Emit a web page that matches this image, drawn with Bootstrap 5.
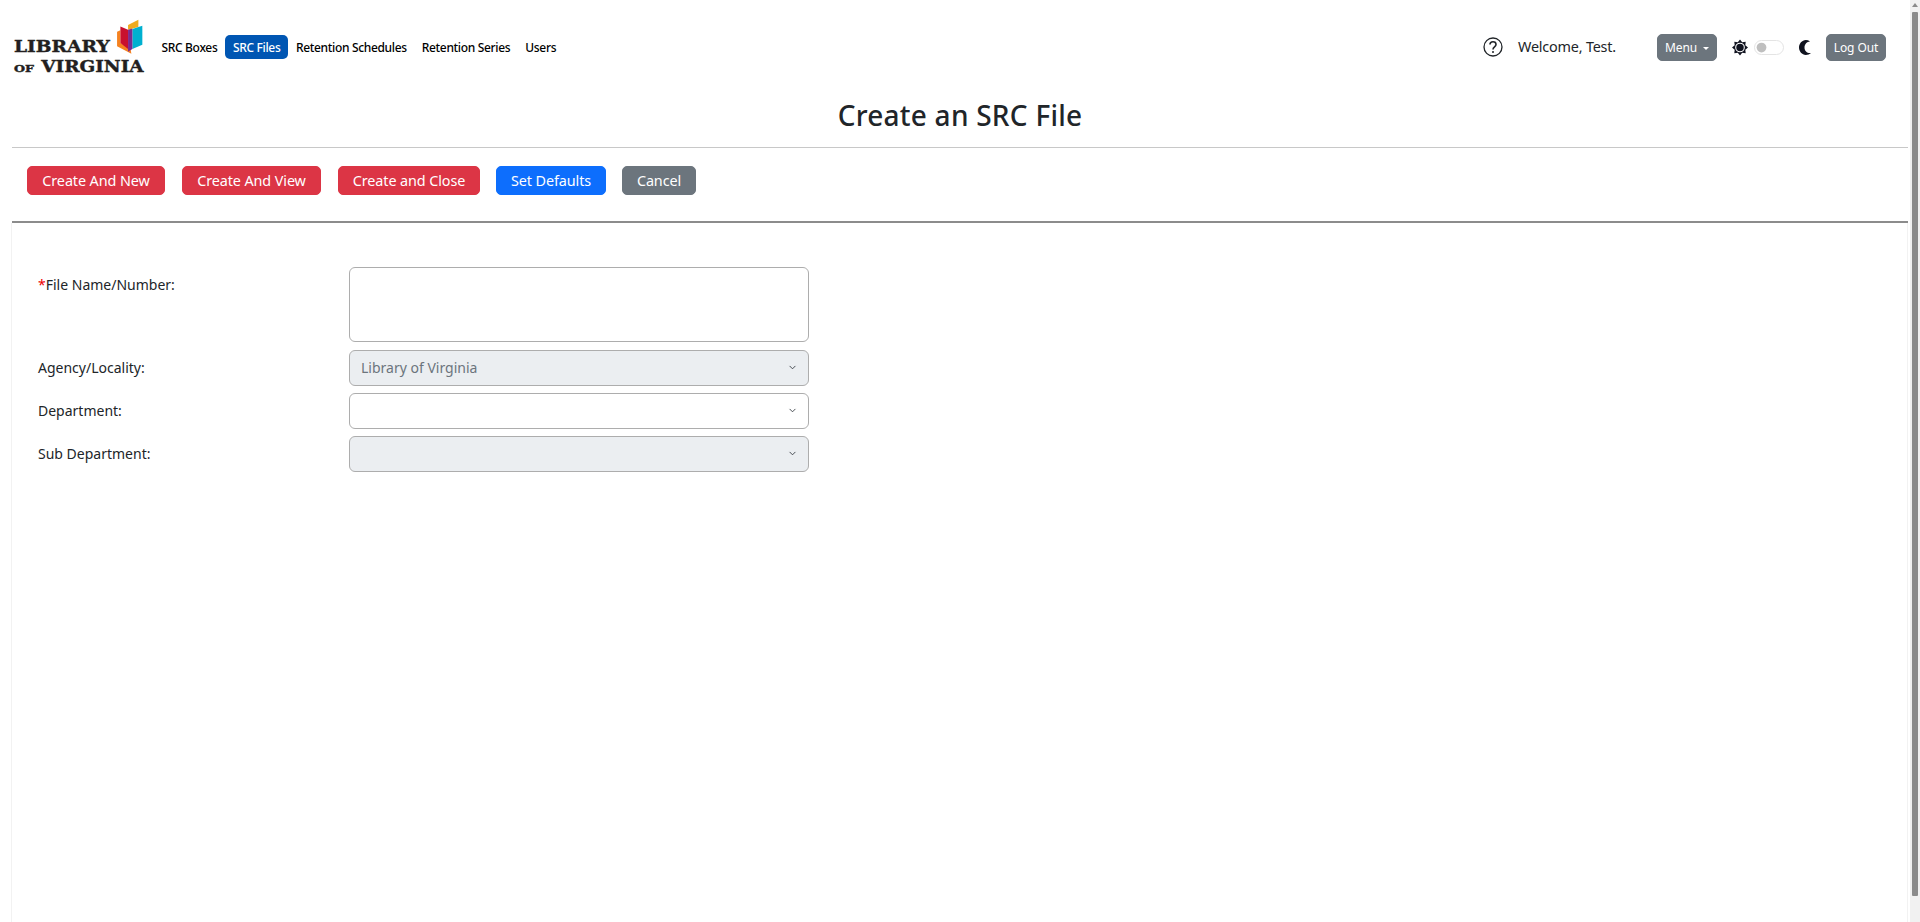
<!DOCTYPE html>
<html lang="en">
<head>
<meta charset="utf-8">
<title>Create an SRC File</title>
<link href="https://cdn.jsdelivr.net/npm/bootstrap@5.3.0/dist/css/bootstrap.min.css" rel="stylesheet">
<style>
html, body { height: 100%; overflow: hidden; }
body { font-family: "Noto Sans", "Open Sans", "Liberation Sans", sans-serif; font-size: 14px; color: #212529; }
.page-wrap { padding: 0 12px; height: 922px; display: flex; flex-direction: column; }
.top-bar { height: 94px; padding: 0 22px 0 0; }
.logo-svg { width: 133px; height: 57px; margin: 18px 9px 0 0; align-self: flex-start; }
.logo-word { font-family: "DejaVu Serif", "Liberation Serif", serif; font-weight: 700; fill: #231f20; stroke: #231f20; stroke-width: 1.2px; }
.main-link { display: block; color: #000; font-size: 12px; font-weight: 500; letter-spacing: -.33px; line-height: 23px; padding: 1px 7.5px 0; border-radius: 5px; text-decoration: none; }
.main-link.is-current { background: #0056b3; color: #fff; padding: 1px 8px 0; }
.help-svg { width: 20px; height: 20px; margin-right: 15px; }
.welcome-text { font-size: 14.4px; letter-spacing: -.2px; width: 139px; }
.small-btn { font-size: 12px; width: 60px; height: 27px; padding: 0; line-height: 25px; border-radius: 5px; letter-spacing: -.1px; }
.dropdown-toggle.small-btn::after { margin-left: 6px; border-top-width: .26em; border-right-width: .26em; border-left-width: .26em; vertical-align: .15em; }
.dark-svg { display: block; }
.sun-svg { margin: 0 6px 0 15px; }
.moon-svg { margin: 0 15px; }
.theme-switch { min-height: 0; margin: 0; padding: 0; font-size: 15px; line-height: 0; }
.theme-switch .form-check-input { margin: 0; width: 30px; height: 15px; border-color: #e4e4e4; float: none; }
.page-title { font-size: 28px; font-weight: 500; letter-spacing: .25px; text-align: center; margin: 0; height: 53px; line-height: 42px; }
.rule-a { margin: 0; border: 0; border-top: 1px solid #c8c8c8; opacity: 1; }
.rule-b { margin: 0; border: 0; border-top: 2px solid #8c8c8c; opacity: 1; }
.action-row { padding: 18px 15px 26px; gap: 17px; }
.action-btn { font-size: 14.4px; height: 29px; padding: 0; line-height: 27px; border-radius: 5px; letter-spacing: -.1px; }
.w-a { width: 138px; } .w-b { width: 139px; } .w-c { width: 142px; } .w-d { width: 110px; margin-left: -1px; } .w-e { width: 74px; margin-left: -1px; }
.form-zone { flex: 1; border-left: 1px solid #f2f2f2; border-right: 1px solid #f2f2f2; padding: 44px 26px 0; margin-left: -1px; }
.field-line { display: flex; margin-bottom: 7.5px; }
.field-line.first-line { margin-bottom: 8px; }
.field-label { width: 311px; font-size: 14px; margin: 0; align-self: center; }
.field-label.at-top { align-self: flex-start; padding-top: 7px; }
.req-mark { color: #e00; }
.field-box { width: 460px; border-color: #adadad; border-radius: 6px; font-size: 14px; padding: 0 11px; }
textarea.field-box { height: 75px; resize: none; }
select.field-box { height: 35.5px; background-size: 9px 7px; background-position: right 11px center; padding-top: 0; padding-bottom: 0; }
select.field-box:disabled { background-color: #ebeef1; color: #6c757d; }
.fake-scrollbar { position: fixed; top: 0; right: 0; bottom: 0; width: 10px; background: #f1f1f1; }
.fake-thumb { position: absolute; top: 12px; left: 2px; width: 6px; height: 884px; background: #8b8b8b; border-radius: 1px; }
.fake-arrow { position: absolute; top: 3px; left: 2px; width: 0; height: 0; border-left: 3px solid transparent; border-right: 3px solid transparent; border-bottom: 4px solid #8b8b8b; }
</style>
</head>
<body>
<div class="page-wrap">
  <nav class="top-bar d-flex align-items-center">
    <svg class="logo-svg" viewBox="36 25 400 171" role="img" aria-label="Library of Virginia">
      <polygon points="385,46 416,30 416,52 385,60" fill="#f0ab1e"/>
      <polygon points="352,66 362,62 362,100 392,115 395,132 352,110" fill="#f58220"/>
      <polygon points="398,58 428,48 428,105 398,118" fill="#00b0d0"/>
      <polygon points="362,50 385,60 385,118 362,100" fill="#c8102e"/>
      <polygon points="385,60 398,56 398,118 385,126" fill="#7a2a90"/>
      <text class="logo-word" x="42" y="128" font-size="50" textLength="288" lengthAdjust="spacingAndGlyphs">LIBRARY</text>
      <text class="logo-word" x="42" y="187" font-size="28" textLength="60" lengthAdjust="spacingAndGlyphs">OF</text>
      <text class="logo-word" x="124" y="187" font-size="50" textLength="308" lengthAdjust="spacingAndGlyphs">VIRGINIA</text>
    </svg>
    <div class="d-flex align-items-center">
      <a class="main-link" href="#">SRC Boxes</a>
      <a class="main-link is-current" href="#">SRC Files</a>
      <a class="main-link" href="#">Retention Schedules</a>
      <a class="main-link" href="#">Retention Series</a>
      <a class="main-link" href="#">Users</a>
    </div>
    <div class="d-flex align-items-center ms-auto">
      <svg class="help-svg" viewBox="0 0 20 20" fill="none" stroke="#212529" stroke-width="1.3">
        <circle cx="10" cy="10" r="9"/>
        <path d="M7 7.6C7 5.8 8.3 4.8 10 4.8s3 1 3 2.6c0 2.400-3 2.400-3 5" stroke-width="1.6"/>
        <circle cx="10" cy="15" r="1" fill="#212529" stroke="none"/>
      </svg>
      <span class="welcome-text">Welcome, Test.</span>
      <button type="button" class="btn btn-secondary small-btn dropdown-toggle">Menu</button>
      <svg class="dark-svg sun-svg" width="16" height="17" viewBox="0 0 16 16" aria-hidden="true">
        <polygon points="8,0 10.2,2.7 13.7,2.3 13.3,5.800 16,8 13.3,10.2 13.7,13.7 10.2,13.3 8,16 5.800,13.3 2.3,13.7 2.7,10.2 0,8 2.7,5.800 2.3,2.3 5.800,2.7" fill="#10131f"/>
        <circle cx="8" cy="8" r="4.300" fill="none" stroke="#fff" stroke-width="1.1"/>
      </svg>
      <div class="form-check form-switch theme-switch">
        <input class="form-check-input" type="checkbox" role="switch" aria-label="Theme">
      </div>
      <svg class="dark-svg moon-svg" width="12" height="15" viewBox="0 0 12 15" aria-hidden="true">
        <path d="M6.800 0C3 .3 0 3.500 0 7.500S3 14.700 6.800 15c2 0 3.800-.7 5.200-2-3.600.6-6.500-2-6.500-5.500S8 1.500 11 1.400C9.700.5 8.300 0 6.800 0z" fill="#10131f"/>
      </svg>
      <button type="button" class="btn btn-secondary small-btn">Log Out</button>
    </div>
  </nav>

  <h1 class="page-title">Create an SRC File</h1>
  <hr class="rule-a">
  <div class="d-flex action-row">
    <button type="button" class="btn btn-danger action-btn w-a">Create And New</button>
    <button type="button" class="btn btn-danger action-btn w-b">Create And View</button>
    <button type="button" class="btn btn-danger action-btn w-c">Create and Close</button>
    <button type="button" class="btn btn-primary action-btn w-d">Set Defaults</button>
    <button type="button" class="btn btn-secondary action-btn w-e">Cancel</button>
  </div>
  <hr class="rule-b">

  <form class="form-zone">
    <div class="field-line first-line">
      <label class="field-label at-top" for="f1"><span class="req-mark">*</span>File Name/Number:</label>
      <textarea id="f1" class="form-control field-box"></textarea>
    </div>
    <div class="field-line">
      <label class="field-label" for="f2">Agency/Locality:</label>
      <select id="f2" class="form-select field-box" disabled><option>Library of Virginia</option></select>
    </div>
    <div class="field-line">
      <label class="field-label" for="f3">Department:</label>
      <select id="f3" class="form-select field-box"><option></option></select>
    </div>
    <div class="field-line">
      <label class="field-label" for="f4">Sub Department:</label>
      <select id="f4" class="form-select field-box" disabled><option></option></select>
    </div>
  </form>
</div>
<div class="fake-scrollbar" aria-hidden="true"><div class="fake-arrow"></div><div class="fake-thumb"></div></div>
<script src="https://cdn.jsdelivr.net/npm/bootstrap@5.3.0/dist/js/bootstrap.bundle.min.js"></script>
</body>
</html>
